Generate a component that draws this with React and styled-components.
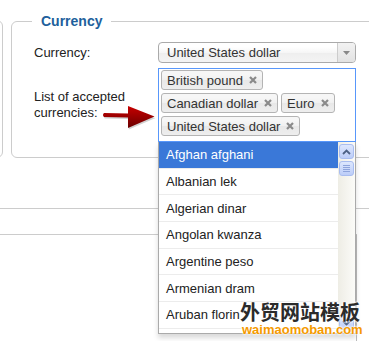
import styled, { createGlobalStyle } from "styled-components";

const GlobalStyle = createGlobalStyle`
  html, body {
    margin: 0;
    padding: 0;
    background: #fff;
  }
  body {
    font-family: "Liberation Sans", Arial, sans-serif;
    font-size: 13px;
    color: #222;
    overflow: hidden;
  }
  * {
    box-sizing: border-box;
  }
`;

const selected = ["British pound", "Canadian dollar", "Euro", "United States dollar"];

const options = [
    "Afghan afghani",
    "Albanian lek",
    "Algerian dinar",
    "Angolan kwanza",
    "Argentine peso",
    "Armenian dram",
    "Aruban florin",
];

const App = () => {
    return (
        <Page>
            <GlobalStyle />

            <TopArea>
                <SidePanel />
                <Fieldset>
                    <Legend>Currency</Legend>
                    <Form>
                        <Row>
                            <Label>Currency:</Label>
                            <Select>
                                <span>United States dollar</span>
                                <SelectArrow>
                                    <svg width="7" height="4" viewBox="0 0 7 4">
                                        <path d="M0 0 L7 0 L3.5 4 Z" fill="#888" />
                                    </svg>
                                </SelectArrow>
                            </Select>
                        </Row>

                        <Row>
                            <Label>List of accepted<br />currencies:</Label>
                            <Pointer width="53" height="25" viewBox="0 0 53 25">
                                <defs>
                                    <linearGradient id="arrowFill" x1="0" y1="0" x2="0" y2="1">
                                        <stop offset="0" stopColor="#c80000" />
                                        <stop offset="1" stopColor="#6a0000" />
                                    </linearGradient>
                                </defs>
                                <path d="M2 12.5 L26 13 L26 23.5 L52.5 12 L26 1.5 L26 9 L2 8.5 Q0 10.5 2 12.5 Z" fill="rgba(0,0,0,0.18)" transform="translate(0.8 1)" />
                                <path d="M2 12.5 L26 13 L26 23.5 L52.5 12 L26 1.5 L26 9 L2 8.5 Q0 10.5 2 12.5 Z" fill="url(#arrowFill)" transform="translate(0 -0.5)" />
                            </Pointer>
                            <Chosen>
                                <Choices>
                                    {selected.map((c) =>
                                        <Tag key={c}>
                                            {c}
                                            <svg width="8" height="8" viewBox="0 0 8 8">
                                                <path d="M1 1 L7 7 M7 1 L1 7" stroke="#8a8a8a" strokeWidth="2.2" />
                                            </svg>
                                        </Tag>
                                    )}
                                </Choices>
                                <Drop>
                                    <Options>
                                        {options.map((o, i) =>
                                            <Option key={o} active={i === 0}>{o}</Option>
                                        )}
                                    </Options>
                                    <Scrollbar>
                                        <ScrollButton>
                                            <svg width="9" height="6" viewBox="0 0 9 6">
                                                <path d="M1 5 L4.5 1.5 L8 5" stroke="#4d6185" strokeWidth="1.8" fill="none" />
                                            </svg>
                                        </ScrollButton>
                                        <Thumb>
                                            <i /><i /><i /><i />
                                        </Thumb>
                                        <Track />
                                        <ScrollButton>
                                            <svg width="9" height="6" viewBox="0 0 9 6">
                                                <path d="M1 1 L4.5 4.5 L8 1" stroke="#4d6185" strokeWidth="1.8" fill="none" />
                                            </svg>
                                        </ScrollButton>
                                    </Scrollbar>
                                </Drop>
                            </Chosen>
                        </Row>
                    </Form>
                </Fieldset>
            </TopArea>

            <Band />
            <LowerPanel />

            <Watermark>
                <strong>外贸网站模板</strong>
                <span>waimaomoban.com</span>
            </Watermark>
        </Page>
    );
};

const Page = styled.div`
    position: relative;
    width: 369px;
    height: 341px;
    overflow: hidden;
    background: #fff;
`;

const TopArea = styled.div`
    display: flex;
    align-items: flex-start;
    padding-top: 13px;
`;

const SidePanel = styled.div`
    flex: none;
    width: 13px;
    height: 138px;
    margin: 7px 0 0 -10px;
    border: 1px solid #ccc;
    border-radius: 6px;
`;

const Fieldset = styled.fieldset`
    flex: 1;
    min-width: 0;
    margin: 0 -40px 0 8px;
    padding: 0 0 15px 22px;
    border: 1px solid #ccc;
    border-radius: 6px;
`;

const Legend = styled.legend`
    margin-left: -2px;
    padding: 0 9px;
    font-size: 14px;
    font-weight: 700;
    line-height: 16px;
    color: #215f9c;
`;

const Form = styled.div`
    display: flex;
    flex-direction: column;
    gap: 5px;
    margin-top: 13px;
`;

const Row = styled.div`
    position: relative;
    display: grid;
    grid-template-columns: 124px 198px;
    align-items: center;
`;

const Label = styled.label`
    font-size: 13px;
    line-height: 16px;
    color: #222;
`;

const Select = styled.div`
    display: flex;
    align-items: center;
    justify-content: space-between;
    height: 21px;
    padding-left: 8px;
    border: 1px solid #aaa;
    border-radius: 4px;
    background: linear-gradient(#fff 20%, #f6f6f6 50%, #eee 52%, #f4f4f4 100%);
    color: #333;
    overflow: hidden;
`;

const SelectArrow = styled.div`
    display: flex;
    align-items: center;
    justify-content: center;
    width: 18px;
    height: 100%;
    border-left: 1px solid #ccc;
    background: linear-gradient(#f2f2f2, #e2e2e2);
`;

const Pointer = styled.svg`
    position: absolute;
    left: 68px;
    top: 37px;
`;

const Chosen = styled.div`
    position: relative;
    width: 198px;
`;

const Choices = styled.div`
    display: flex;
    flex-wrap: wrap;
    gap: 3px 3px;
    padding: 1px 2px 5px 2px;
    border: 1px solid #5897fb;
    background: #fff;
`;

const Tag = styled.span`
    display: inline-flex;
    align-items: center;
    gap: 6px;
    height: 20px;
    padding: 0 5px;
    border: 1px solid #b4b4b4;
    border-radius: 3px;
    background: linear-gradient(#f6f6f6 20%, #f0f0f0 50%, #e8e8e8 52%, #eee 100%);
    color: #333;
    font-size: 13px;
    line-height: 13px;
`;

const Drop = styled.div`
    position: absolute;
    top: 100%;
    left: 0;
    width: 198px;
    display: flex;
    border: 1px solid #aaa;
    border-top: 0;
    background: #fff;
    box-shadow: 0 4px 5px rgba(0, 0, 0, 0.15);
    z-index: 5;
`;

const Options = styled.ul`
    flex: 1;
    height: 191px;
    margin: 0;
    padding: 0;
    list-style: none;
    overflow: hidden;
`;

const Option = styled.li`
    display: flex;
    align-items: center;
    height: 26.67px;
    padding-left: 7px;
    border-bottom: 1px solid #ececec;
    background: ${props => props.active ? "#3a78d8" : "#fff"};
    color: ${props => props.active ? "#fff" : "#222"};
    font-size: 13px;
    white-space: nowrap;
`;

const Scrollbar = styled.div`
    display: flex;
    flex-direction: column;
    gap: 2px;
    width: 17px;
    padding: 2px 1px 3px 1px;
    background: linear-gradient(to right, #eeede5, #fbfbf8);
`;

const ScrollButton = styled.div`
    display: flex;
    align-items: center;
    justify-content: center;
    height: 15px;
    border: 1px solid #a9bdf0;
    border-radius: 3px;
    background: linear-gradient(#dde7fe, #bccdf8);
`;

const Thumb = styled(ScrollButton)`
    flex-direction: column;
    gap: 1px;

    i {
        display: block;
        width: 7px;
        height: 1px;
        background: #8ea4dc;
    }
`;

const Track = styled.div`
    flex: 1;
`;

const Band = styled.div`
    height: 26px;
    margin-top: 50px;
    border-top: 1px solid #ccc;
`;

const LowerPanel = styled.div`
    width: 357px;
    height: 120px;
    border-top: 1px solid #ccc;
    border-right: 1px solid #bbb;
`;

const Watermark = styled.div`
    position: absolute;
    left: 240px;
    top: 299px;
    display: flex;
    flex-direction: column;
    z-index: 10;
    text-shadow: 0 0 2px #fff, 0 0 2px #fff, 0 0 3px #fff;

    strong {
        font-family: "Noto Sans CJK SC", sans-serif;
        font-size: 20px;
        font-weight: 700;
        line-height: 25px;
        color: #2b2b2b;
    }

    span {
        margin-left: 2px;
        font-family: "Liberation Sans", Arial, sans-serif;
        font-size: 13px;
        font-weight: 700;
        line-height: 12px;
        color: #f59a00;
    }
`;

export default App;
